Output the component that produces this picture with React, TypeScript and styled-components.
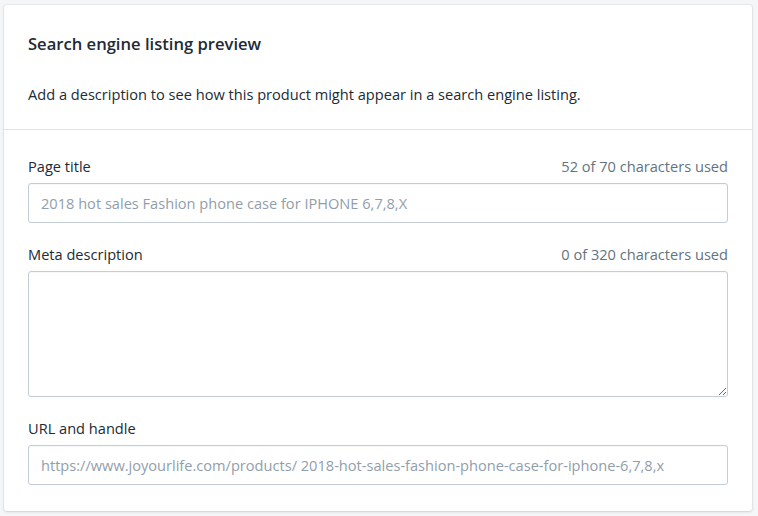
import React from 'react';
import styled, { createGlobalStyle } from 'styled-components';

const GlobalStyle = createGlobalStyle`
  html, body {
    margin: 0;
    padding: 0;
    background: #f4f6f8;
    font-family: "Open Sans", "Noto Sans", sans-serif;
    color: #212b36;
  }
`;

const Page = styled.div`
  padding: 5px 6px 6px 4px;
`;

const Card = styled.section`
  background: #fff;
  border-radius: 3px;
  box-shadow: 0 0 0 1px rgba(63, 63, 68, 0.05), 0 1px 3px 0 rgba(63, 63, 68, 0.15);
`;

const Section = styled.div<{ $divided?: boolean }>`
  padding: ${(p) => (p.$divided ? '26px 24px 26px' : '24px 24px 25px')};
  border-top: ${(p) => (p.$divided ? '1px solid #dfe3e8' : 'none')};
`;

const Heading = styled.h2`
  margin: 0;
  font-size: 16.6px;
  font-weight: 600;
  line-height: 30px;
`;

const Description = styled.p`
  margin: 25px 0 0;
  font-size: 14.6px;
  line-height: 20px;
`;

const Field = styled.div`
  & + & {
    margin-top: 21px;
  }
`;

const LabelRow = styled.div`
  display: flex;
  justify-content: space-between;
  align-items: center;
  margin-bottom: 7px;
  font-size: 14.6px;
  line-height: 20px;
`;

const Counter = styled.span`
  color: #637381;
`;

const inputBase = `
  display: block;
  box-sizing: border-box;
  width: 100%;
  border: 1px solid #c4cdd5;
  border-radius: 3px;
  padding: 8px 12px;
  font-family: "Open Sans", "Noto Sans", sans-serif;
  font-size: 14.6px;
  color: #212b36;
  background: #fff;
  outline: none;
  box-shadow: inset 0 1px 0 0 rgba(99, 115, 129, 0.05);
  &::placeholder {
    color: #919eab;
  }
`;

const Input = styled.input`
  ${inputBase}
  height: 40px;
`;

const TextArea = styled.textarea`
  ${inputBase}
  height: 126px;
  resize: vertical;
`;

export default function App() {
  return (
    <>
      <GlobalStyle />
      <Page>
        <Card>
          <Section>
            <Heading>Search engine listing preview</Heading>
            <Description>
              Add a description to see how this product might appear in a search engine listing.
            </Description>
          </Section>
          <Section $divided>
            <Field>
              <LabelRow>
                <span>Page title</span>
                <Counter>52 of 70 characters used</Counter>
              </LabelRow>
              <Input placeholder="2018 hot sales Fashion phone case for IPHONE 6,7,8,X" />
            </Field>
            <Field>
              <LabelRow>
                <span>Meta description</span>
                <Counter>0 of 320 characters used</Counter>
              </LabelRow>
              <TextArea />
            </Field>
            <Field>
              <LabelRow>
                <span>URL and handle</span>
              </LabelRow>
              <Input placeholder="https://www.joyourlife.com/products/ 2018-hot-sales-fashion-phone-case-for-iphone-6,7,8,x" />
            </Field>
          </Section>
        </Card>
      </Page>
    </>
  );
}
